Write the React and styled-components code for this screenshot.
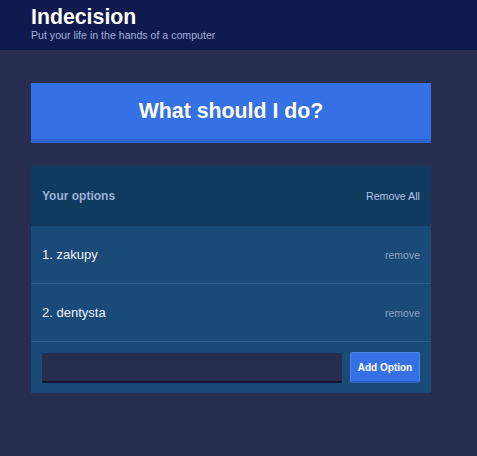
import React from 'react';
import styled, {createGlobalStyle} from 'styled-components';

const GlobalStyle = createGlobalStyle`
    html,
    body {
        margin: 0;
        padding: 0;
        background-color: #272e50;
        font-family: 'Liberation Sans', Arial, sans-serif;
    }
    * {
        box-sizing: border-box;
    }
`;

const Header = styled.header`
    height: 50px;
    background-color: #0f1a4e;
    padding: 5px 31px 0;
`;

const Title = styled.h1`
    margin: 0;
    font-size: 21.3px;
    line-height: 24px;
    font-weight: bold;
    color: #ffffff;
`;

const Subtitle = styled.h2`
    margin: 0;
    font-size: 10.6px;
    line-height: 13px;
    font-weight: normal;
    color: #a5b0dc;
`;

const Container = styled.main`
    width: 431px;
    padding: 33px 0 0 31px;
`;

const BigButton = styled.button`
    display: block;
    width: 100%;
    height: 60px;
    margin: 0 0 22px;
    border: none;
    border-bottom: 4px solid #2c62cc;
    background-color: #3571e4;
    color: #ffffff;
    font-family: inherit;
    font-size: 21.3px;
    font-weight: bold;
    cursor: pointer;
`;

const Widget = styled.section`
    background-color: #1a4a78;
`;

const WidgetHeader = styled.div`
    display: flex;
    align-items: center;
    justify-content: space-between;
    height: 61px;
    padding: 0 11px;
    background-color: #113a5f;
`;

const WidgetTitle = styled.h3`
    margin: 0;
    font-size: 12px;
    font-weight: bold;
    color: #9cafd8;
`;

const LinkButton = styled.button`
    padding: 0;
    border: none;
    background: none;
    font-family: inherit;
    font-size: ${({$small}) => ($small ? '10.5px' : '10.7px')};
    color: ${({$muted}) => ($muted ? '#8aa3c8' : '#b4c2e2')};
    cursor: pointer;
`;

const Option = styled.div`
    display: flex;
    align-items: center;
    justify-content: space-between;
    height: 58px;
    padding: 0 11px;
    border-bottom: 1px solid #2b5e8e;
`;

const OptionText = styled.p`
    margin: 0;
    font-size: 13px;
    color: #eef2fb;
`;

const Form = styled.form`
    display: flex;
    align-items: center;
    gap: 8px;
    height: 51px;
    padding: 0 11px;
`;

const Input = styled.input`
    width: 300px;
    height: 30px;
    border: none;
    border-bottom: 2px solid #11152f;
    background-color: #272d4f;
    color: #ffffff;
    outline: none;
`;

const AddButton = styled.button`
    height: 31px;
    width: 70px;
    padding: 0;
    border: 1px solid #4a86ea;
    border-bottom: 2px solid #2c5fc3;
    border-radius: 2px;
    background-color: #3571e4;
    color: #ffffff;
    font-family: inherit;
    font-size: 10px;
    font-weight: bold;
    cursor: pointer;
`;

const options = ['zakupy', 'dentysta'];

export default function App() {
    return (
        <>
            <GlobalStyle />
            <Header>
                <Title>Indecision</Title>
                <Subtitle>Put your life in the hands of a computer</Subtitle>
            </Header>
            <Container>
                <BigButton>What should I do?</BigButton>
                <Widget>
                    <WidgetHeader>
                        <WidgetTitle>Your options</WidgetTitle>
                        <LinkButton>Remove All</LinkButton>
                    </WidgetHeader>
                    {options.map((option, index) => (
                        <Option key={option}>
                            <OptionText>
                                {index + 1}. {option}
                            </OptionText>
                            <LinkButton $small $muted>
                                remove
                            </LinkButton>
                        </Option>
                    ))}
                    <Form onSubmit={(e) => e.preventDefault()}>
                        <Input type="text" name="option" />
                        <AddButton>Add Option</AddButton>
                    </Form>
                </Widget>
            </Container>
        </>
    );
}
